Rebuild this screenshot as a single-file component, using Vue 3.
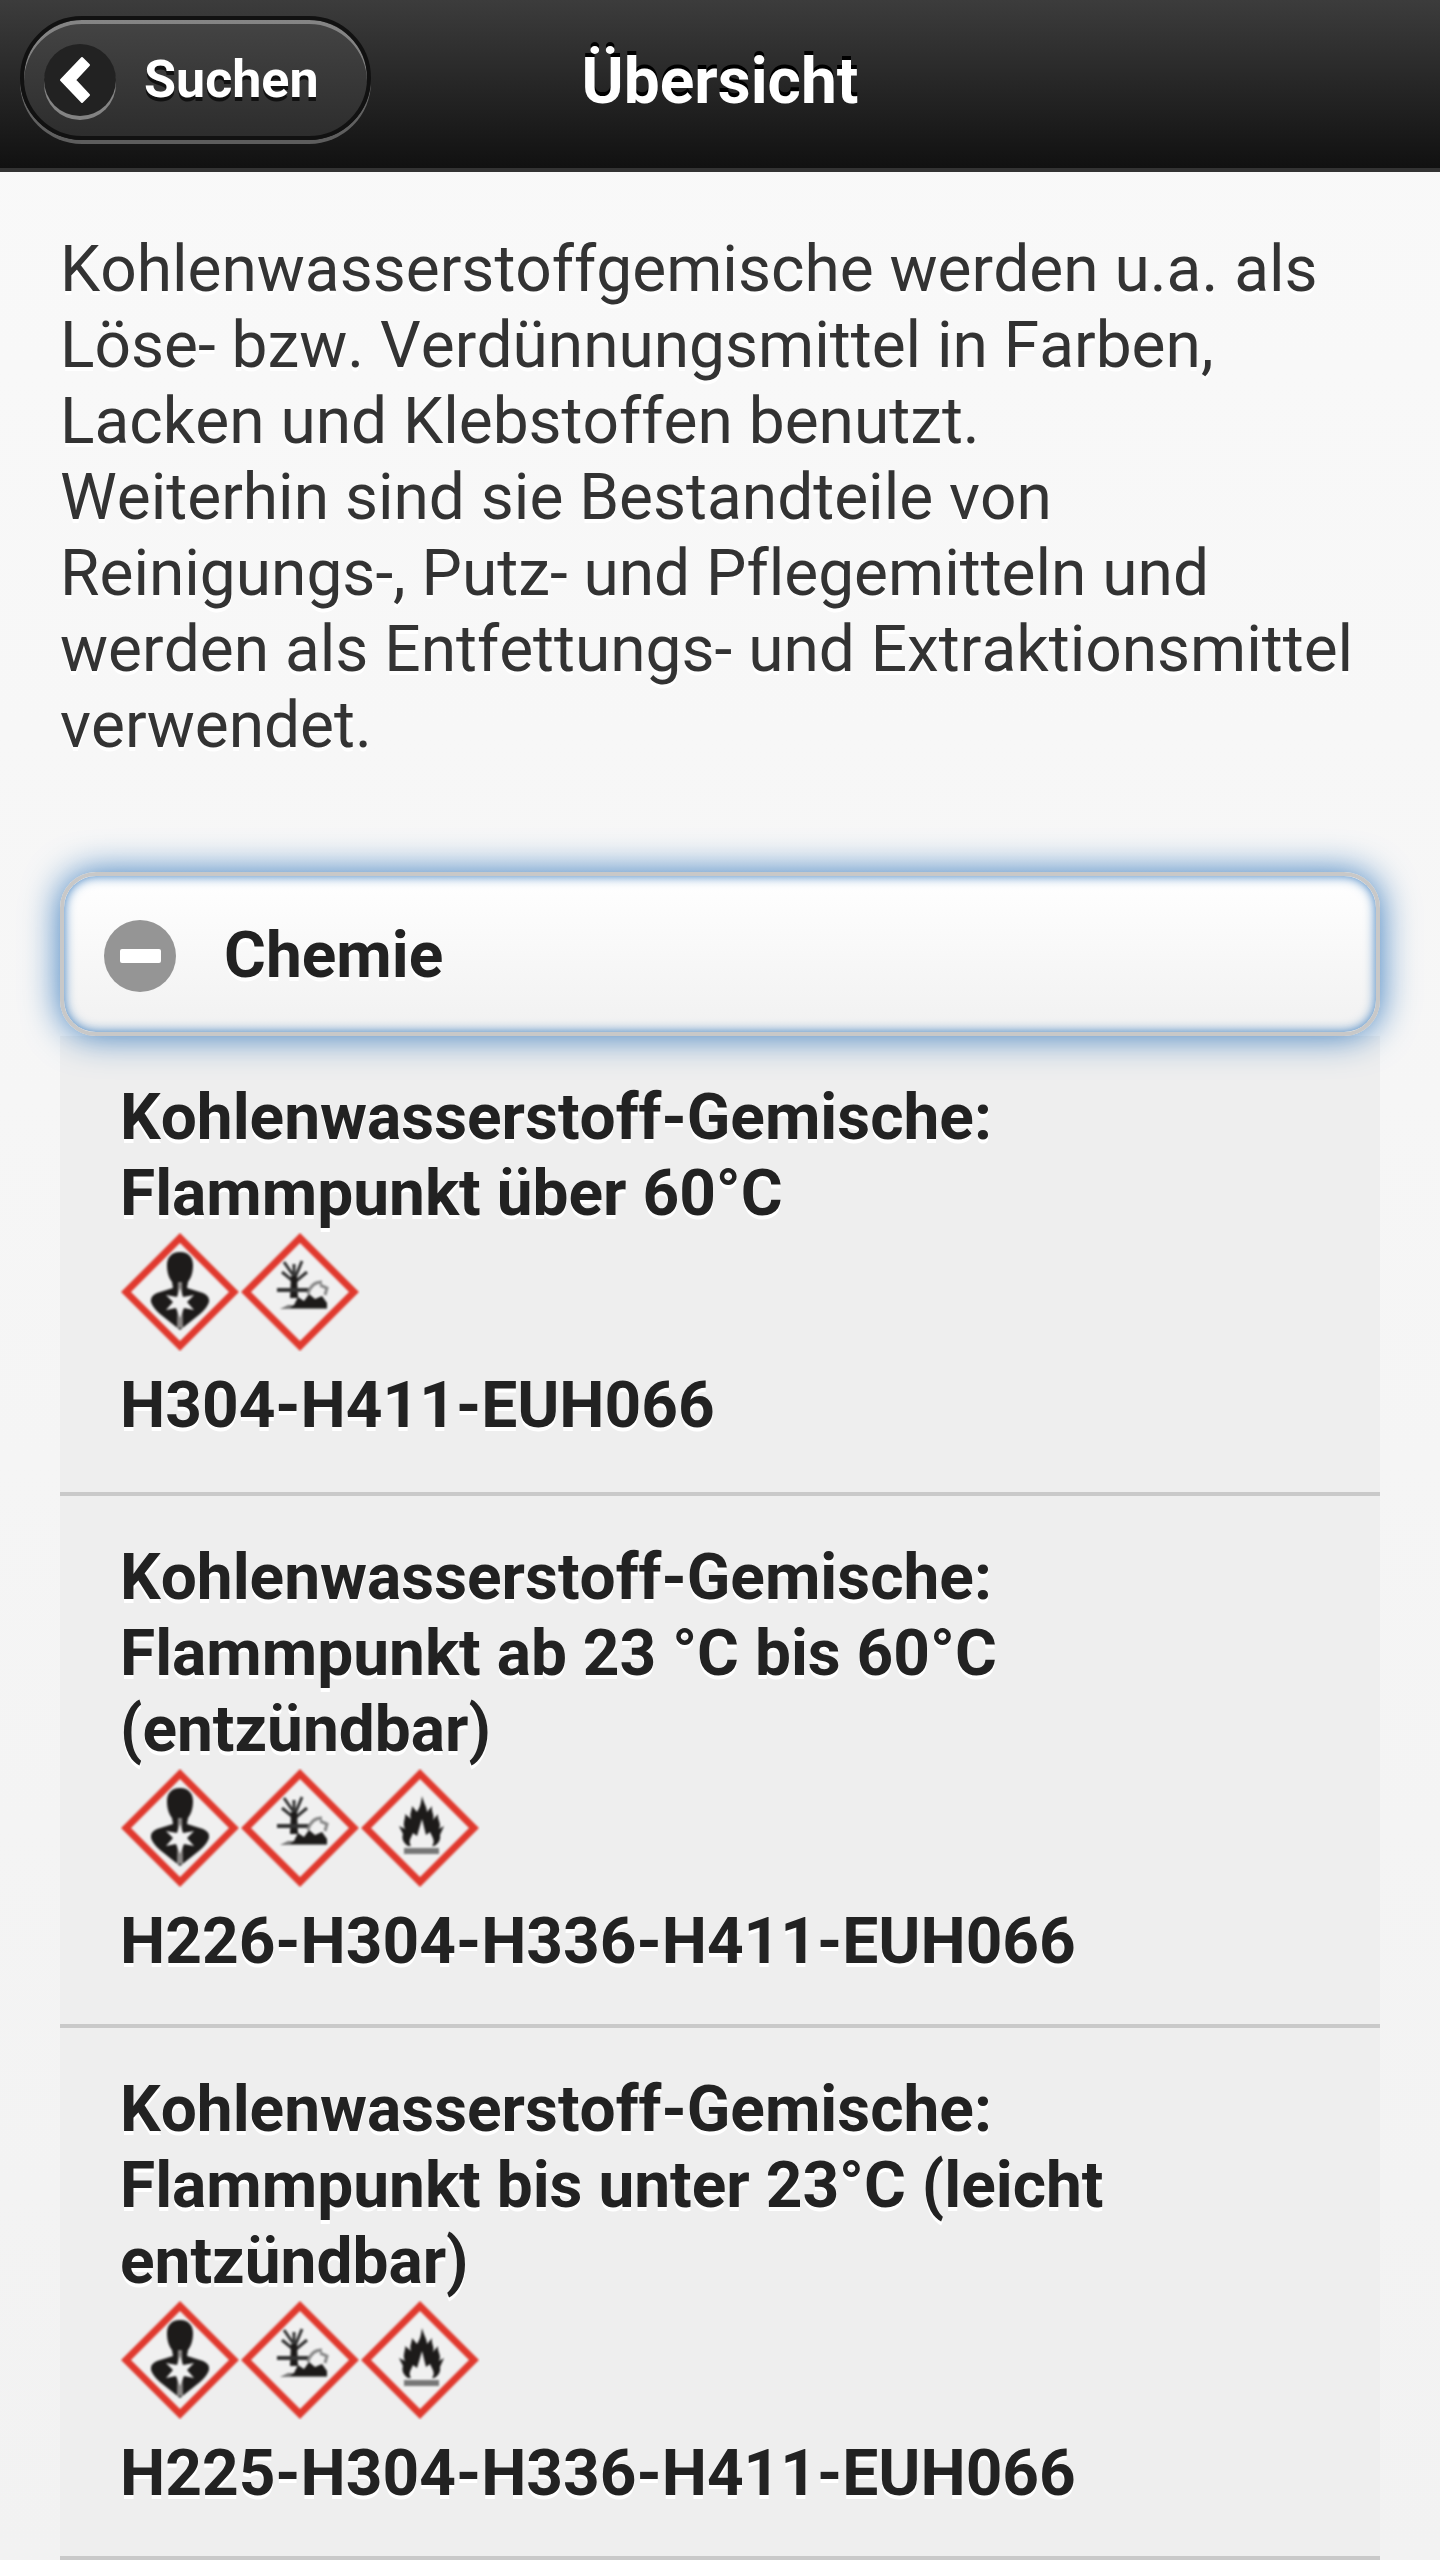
<script setup>
import { ref } from 'vue'

const open = ref(true)

const items = [
  {
    title: 'Kohlenwasserstoff-Gemische: Flammpunkt über 60°C',
    symbols: ['health', 'environment'],
    codes: 'H304-H411-EUH066'
  },
  {
    title: 'Kohlenwasserstoff-Gemische: Flammpunkt ab 23 °C bis 60°C (entzündbar)',
    symbols: ['health', 'environment', 'flame'],
    codes: 'H226-H304-H336-H411-EUH066'
  },
  {
    title: 'Kohlenwasserstoff-Gemische: Flammpunkt bis unter 23°C (leicht entzündbar)',
    symbols: ['health', 'environment', 'flame'],
    codes: 'H225-H304-H336-H411-EUH066'
  }
]

const labels = {
  health: 'Gesundheitsgefahr',
  environment: 'Umweltgefährlich',
  flame: 'Entzündbar'
}
</script>

<template>
  <div class="page">
    <header class="header">
      <a class="back" href="#suchen">
        <svg class="back-icon" viewBox="0 0 72 72" aria-hidden="true">
          <path d="M17 36 38 14 45 21 31 36 45 51 38 58Z" />
        </svg>
        <span>Suchen</span>
      </a>
      <h1 class="title">Übersicht</h1>
    </header>

    <main class="content">
      <p class="intro">
        Kohlenwasserstoffgemische werden u.a. als Löse- bzw. Verdünnungsmittel in Farben, Lacken und Klebstoffen benutzt.<br />
        Weiterhin sind sie Bestandteile von Reinigungs-, Putz- und Pflegemitteln und werden als Entfettungs- und Extraktionsmittel verwendet.
      </p>

      <section>
        <h2 class="heading">
          <button class="toggle" type="button" :aria-expanded="open" @click="open = !open">
            <svg class="toggle-icon" viewBox="0 0 72 72" aria-hidden="true">
              <circle cx="36" cy="36" r="36" />
              <rect class="sign" x="16" y="29" width="41" height="14" rx="2" />
              <rect v-if="!open" class="sign" x="29" y="16" width="14" height="41" rx="2" />
            </svg>
            <span>Chemie</span>
          </button>
        </h2>

        <ul v-show="open" class="list">
          <li v-for="item in items" :key="item.codes" class="item">
            <div class="item-title">{{ item.title }}</div>
            <div class="symbols">
              <svg
                v-for="symbol in item.symbols"
                :key="symbol"
                class="symbol"
                viewBox="0 0 120 120"
                role="img"
                :aria-label="labels[symbol]"
              >
                <path class="diamond" d="M60 6 114 60 60 114 6 60Z" />
                <g v-if="symbol === 'health'" class="glyph">
                  <path d="M60 20C69 20 73 26 73 33C73 41 71 46 68 50L67 56 83 61Q90 64 89 70Q87 76 80 82L60 98 40 82Q33 76 31 70Q30 64 37 61L53 56 52 50C49 46 47 41 47 33C47 26 51 20 60 20Z" />
                  <path class="shine" d="M58 50H62L63 96H57Z" />
                  <path class="light" d="M60 56 63 65 74 63 67 70 74 78 64 76 60 86 56 76 46 78 53 70 46 63 57 65Z" />
                </g>
                <g v-else-if="symbol === 'environment'" class="glyph">
                  <path class="line" d="M54 66V32M53 49 42 40M53 43 44 30M55 46 62 29M55 50 67 40" />
                  <path d="M51 44H57L58 66H50Z" />
                  <path class="line ground" d="M37 58H69" />
                  <path class="faint" d="M40 77 48 73H87V77Z" />
                  <path class="fish" d="M68 62C70 54 75 50 82 50M80 53 87 56 85 63" />
                  <path d="M54 73 58 65 64 69 69 62 75 67 82 64 87 71V76H50Z" />
                </g>
                <g v-else class="glyph">
                  <path d="M48 78C42 74 42 69 43 66L39 58 45 61C42 55 46 50 45 46L51 51C49 46 52 43 52 38L57 44C61 38 61 34 62 28C64 36 67 39 67 44L72 38C71 44 75 47 73 52L78 46C77 52 82 55 79 61L84 58 80 67C81 72 78 76 74 78Z" />
                  <path class="light" d="M51 78C48 73 51 70 53 65L57 68 62 51 66 67 70 64C72 69 76 73 72 78Z" />
                  <path class="bar" d="M44 80H79V86H44Z" />
                </g>
              </svg>
            </div>
            <div class="codes">{{ item.codes }}</div>
          </li>
        </ul>
      </section>
    </main>
  </div>
</template>

<style>
body {
  margin: 0;
  background: #f3f3f3;
}
</style>

<style scoped>
.page {
  min-height: 100vh;
  background: linear-gradient(#f9f9f9, #f2f2f2);
  font-family: Roboto, 'Liberation Sans', sans-serif;
  font-size: 64px;
  font-kerning: none;
  font-variant-ligatures: none;
  line-height: 76px;
  color: #333;
  text-shadow: 0 4px 0 #fff;
}

.header {
  display: grid;
  grid-template-columns: 1fr auto 1fr;
  align-items: start;
  padding: 16px 20px 28px;
  border-bottom: 4px solid #333;
  background: linear-gradient(#3c3c3c, #111);
  color: #fff;
}

.back {
  justify-self: start;
  display: flex;
  align-items: center;
  gap: 28px;
  box-sizing: border-box;
  height: 124px;
  padding: 4px 48px 0 20px;
  border: 4px solid #111;
  border-radius: 64px;
  background: linear-gradient(#444, #2d2d2d);
  box-shadow: 0 4px 0 rgba(255, 255, 255, 0.3), inset 0 4px 0 rgba(255, 255, 255, 0.35);
  color: #fff;
  font-size: 52px;
  font-weight: bold;
  text-decoration: none;
  text-shadow: 0 4px 0 #111;
}

.back-icon {
  width: 72px;
  height: 72px;
  border-radius: 50%;
  background: #222;
  box-shadow: 0 4px 0 rgba(255, 255, 255, 0.4);
}

.back-icon path {
  fill: #fff;
  stroke: #fff;
  stroke-width: 2;
  stroke-linejoin: round;
}

.title {
  margin: 0;
  padding-top: 28px;
  font-size: 64px;
  font-weight: bold;
  text-shadow: 0 -4px 0 #000;
}

.content {
  padding: 60px 60px 0;
}

.intro {
  margin: 0 0 108px;
}

.heading {
  margin: 0;
  font-size: 64px;
}

.toggle {
  position: relative;
  display: flex;
  align-items: center;
  gap: 48px;
  box-sizing: border-box;
  width: 100%;
  padding: 42px 40px 38px;
  border: 4px solid #c8c8c8;
  border-radius: 36px;
  background: linear-gradient(#fff, #f1f1f1);
  box-shadow: inset 0 0 12px #387bbe, 0 0 36px #387bbe;
  color: #222;
  font: inherit;
  font-weight: bold;
  text-align: left;
  text-shadow: inherit;
  cursor: pointer;
}

.toggle-icon {
  width: 72px;
  height: 72px;
  fill: #959595;
}

.toggle-icon .sign {
  fill: #fff;
}

.list {
  margin: 0;
  padding: 0;
  list-style: none;
  background: #eee;
  color: #222;
  font-weight: bold;
}

.item {
  padding: 44px 60px;
  border-bottom: 4px solid #c9c9c9;
}

.item:first-child {
  padding-bottom: 48px;
}

.symbols {
  display: flex;
  padding-bottom: 16px;
}

.symbol {
  width: 120px;
  height: 120px;
}

.diamond {
  fill: #f0f0f0;
  stroke: #e0392e;
  stroke-width: 7;
  filter: blur(1px);
}

.glyph {
  fill: #1d1b1a;
  filter: blur(1px);
}

.glyph .light {
  fill: #f0f0f0;
}

.glyph .shine {
  fill: #8a8785;
}

.glyph .line {
  fill: none;
  stroke: #333;
  stroke-width: 3;
}

.glyph .ground {
  stroke-width: 4;
}

.glyph .faint {
  fill: #777;
}

.glyph .fish {
  fill: none;
  stroke: #888;
  stroke-width: 3;
}

.glyph .bar {
  fill: #777;
}
</style>
